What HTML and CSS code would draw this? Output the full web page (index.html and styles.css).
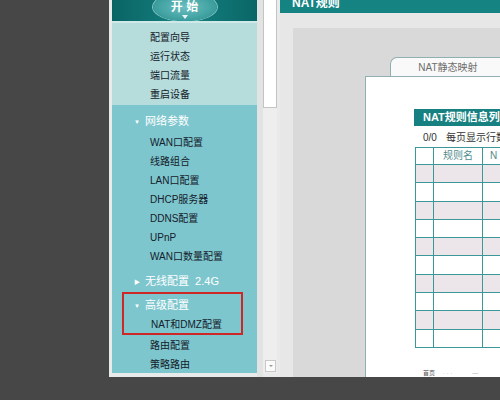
FILE: index.html
```html
<!DOCTYPE html>
<html lang="zh-CN">
<head>
<meta charset="utf-8">
<title>NAT规则</title>
<link rel="stylesheet" href="styles.css">
</head>
<body>
<div class="screen">
  <nav class="sidebar">
    <div class="side-head">
      <div class="start-btn">开&nbsp;始</div>
    </div>
    <ul class="quick">
      <li>配置向导</li>
      <li>运行状态</li>
      <li>端口流量</li>
      <li>重启设备</li>
    </ul>
    <div class="menu">
      <div class="group first"><span class="tri">▼</span>网络参数</div>
      <ul class="items">
        <li>WAN口配置</li>
        <li>线路组合</li>
        <li>LAN口配置</li>
        <li>DHCP服务器</li>
        <li>DDNS配置</li>
        <li>UPnP</li>
        <li>WAN口数量配置</li>
      </ul>
      <div class="group wifi"><span class="tri">▶</span>无线配置&nbsp; 2.4G</div>
      <div class="highlight">
        <div class="group adv"><span class="tri">▼</span>高级配置</div>
        <div class="item-in">NAT和DMZ配置</div>
      </div>
      <ul class="items">
        <li>路由配置</li>
        <li>策略路由</li>
      </ul>
    </div>
  </nav>
  <div class="gap"></div>
  <div class="scrollbar">
    <div class="thumb"></div>
    <div class="track"></div>
    <div class="down"></div>
  </div>
  <main class="content">
    <div class="title-bar">NAT规则</div>
    <div class="stage">
      <div class="tab">NAT静态映射</div>
      <div class="panel">
        <div class="list-head">NAT规则信息列表</div>
        <div class="pager"><span class="count">0/0</span>每页显示行数</div>
        <table class="rules">
          <tr class="hd"><td class="c1"></td><td class="c2">规则名</td><td class="c3">N</td></tr>
          <tr class="alt"><td></td><td></td><td></td></tr>
          <tr><td></td><td></td><td></td></tr>
          <tr class="alt"><td></td><td></td><td></td></tr>
          <tr><td></td><td></td><td></td></tr>
          <tr class="alt"><td></td><td></td><td></td></tr>
          <tr><td></td><td></td><td></td></tr>
          <tr class="alt"><td></td><td></td><td></td></tr>
          <tr><td></td><td></td><td></td></tr>
          <tr class="alt"><td></td><td></td><td></td></tr>
          <tr><td></td><td></td><td></td></tr>
        </table>
        <div class="foot"><span class="f1">首页</span><span class="f2">· · ·</span><span class="f3">―</span></div>
      </div>
    </div>
  </main>
</div>
</body>
</html>
```

FILE: styles.css
```css
html, body {
  margin: 0;
  padding: 0;
  background: #474747;
  font-family: "Liberation Sans", "Noto Sans CJK SC", sans-serif;
}
ul { list-style: none; margin: 0; padding: 0; }

.screen {
  display: flex;
  width: 391px;
  height: 377px;
  margin-left: 109px;
  padding-left: 3px;
  box-sizing: border-box;
  background: #e9eaea;
  overflow: hidden;
}

/* sidebar */
.sidebar {
  width: 145px;
  height: 373px;
  flex: none;
  display: flex;
  flex-direction: column;
  overflow: hidden;
  background: #7ec6ce;
}
.side-head {
  height: 21px;
  flex: none;
  display: flex;
  justify-content: center;
  background: linear-gradient(to right, #0a6464, #137b7b 40%, #137b7b 60%, #0a6666);
  border-bottom: 2px solid #cfe9e9;
}
.start-btn {
  position: relative;
  width: 64px;
  height: 22px;
  margin-top: -7px;
  padding-top: 6px;
  line-height: 16px;
  border-radius: 50%;
  text-align: center;
  color: #fff;
  font-size: 12px;
  font-weight: bold;
  background: radial-gradient(ellipse at center, #6cc0c0 0%, #3a9c9c 70%, #2a8a8a 100%);
  box-shadow: 0 0 0 1px rgba(190, 235, 235, 0.7);
}
.start-btn::after {
  content: "";
  position: absolute;
  left: 29px;
  top: 22px;
  border-left: 3px solid transparent;
  border-right: 3px solid transparent;
  border-top: 4px solid #e8f6f6;
}
.quick {
  height: 82px;
  flex: none;
  box-sizing: border-box;
  padding: 5px 0 0 38px;
  background: #b6dcdc;
}
.quick li, .items li, .item-in {
  height: 19px;
  line-height: 19px;
  font-size: 10px;
  color: #14202a;
  white-space: nowrap;
}
.menu {
  padding-top: 5px;
}
.items li { padding-left: 38px; }
.group {
  height: 22px;
  line-height: 22px;
  padding-left: 22px;
  font-size: 11px;
  color: #ffffff;
  white-space: nowrap;
}
.group.first { height: 23px; line-height: 23px; }
.group.wifi { margin-top: 4px; }
.tri {
  display: inline-block;
  width: 11px;
  font-size: 6px;
  vertical-align: 1px;
}
.highlight {
  margin-left: 10px;
  width: 121px;
  height: 43px;
  box-sizing: border-box;
  border: 2px solid #cf2626;
}
.group.adv {
  height: 23px;
  line-height: 23px;
  padding-left: 10px;
}
.item-in {
  padding-left: 27px;
  height: 16px;
  line-height: 16px;
}
.highlight + .items { margin-top: 1px; }

.gap {
  width: 6px;
  flex: none;
  background: #e2e4e4;
}

/* scrollbar */
.scrollbar {
  width: 14px;
  height: 373px;
  flex: none;
  display: flex;
  flex-direction: column;
  background: #eeeeee;
}
.thumb {
  height: 108px;
  box-sizing: border-box;
  border: 1px solid #c4c4c4;
  border-top: none;
  background: #ffffff;
}
.track { flex: 1; }
.down {
  height: 12px;
  margin: 0 1px 1px 2px;
  box-sizing: border-box;
  border: 1px solid #c8c8c8;
  background: #fbfbfb;
  position: relative;
}
.down::after {
  content: "";
  position: absolute;
  left: 3px;
  top: 4px;
  border-left: 2px solid transparent;
  border-right: 2px solid transparent;
  border-top: 2px solid #999;
}

/* content */
.content {
  margin-left: 3px;
  width: 220px;
  flex: none;
  display: flex;
  flex-direction: column;
  background: #e7e7e7;
}
.title-bar {
  height: 13px;
  flex: none;
  overflow: hidden;
  padding-left: 12px;
  background: #168383;
  color: #ffffff;
  font-size: 12px;
  font-weight: bold;
  line-height: 6px;
}
.stage {
  flex: 1;
  margin: 15px 0 0 13px;
  padding: 29px 0 0 72px;
  background: #d9d9d9;
  display: flex;
  flex-direction: column;
  overflow: hidden;
}
.tab {
  flex: none;
  width: 116px;
  height: 20px;
  margin-left: 25px;
  margin-bottom: -1px;
  box-sizing: border-box;
  border: 1px solid #8fb0b0;
  border-bottom: none;
  border-radius: 7px 7px 0 0;
  background: #f9f9f9;
  color: #6e6e6e;
  font-size: 10px;
  line-height: 19px;
  text-align: center;
  white-space: nowrap;
}
.panel {
  flex: 1;
  min-width: 0;
  border-left: 1px solid #8fb0b0;
  border-top: 1px solid #8fb0b0;
  background: #ffffff;
  padding: 32px 0 0 48px;
  overflow: hidden;
}
.list-head {
  width: 120px;
  height: 17px;
  line-height: 17px;
  padding-left: 9px;
  background: #178080;
  color: #fff;
  font-size: 11px;
  font-weight: bold;
  white-space: nowrap;
}
.pager {
  height: 18px;
  padding-top: 3px;
  padding-left: 9px;
  line-height: 18px;
  font-size: 10px;
  color: #333;
  white-space: nowrap;
}
.count { margin-right: 9px; }
.rules {
  margin-left: 1px;
  border-collapse: collapse;
  width: 110px;
  table-layout: fixed;
}
.rules td {
  border: 1px solid #3c9898;
  height: 17.3px;
  padding: 0;
  font-size: 10px;
  line-height: 14px;
}
.rules .hd td { height: 16px; color: #4f8c8c; }
.rules .c1 { width: 17px; }
.rules .c2 { width: 48px; text-align: center; }
.rules .c3 { padding-left: 7px; }
.rules tr.alt td { background: #ece6ea; }
.foot {
  margin-top: 20px;
  margin-left: 9px;
  font-size: 6px;
  color: #9a9a9a;
  white-space: nowrap;
}
.f1 { color: #555; margin-right: 8px; }
.f2 { margin-right: 20px; }
```
